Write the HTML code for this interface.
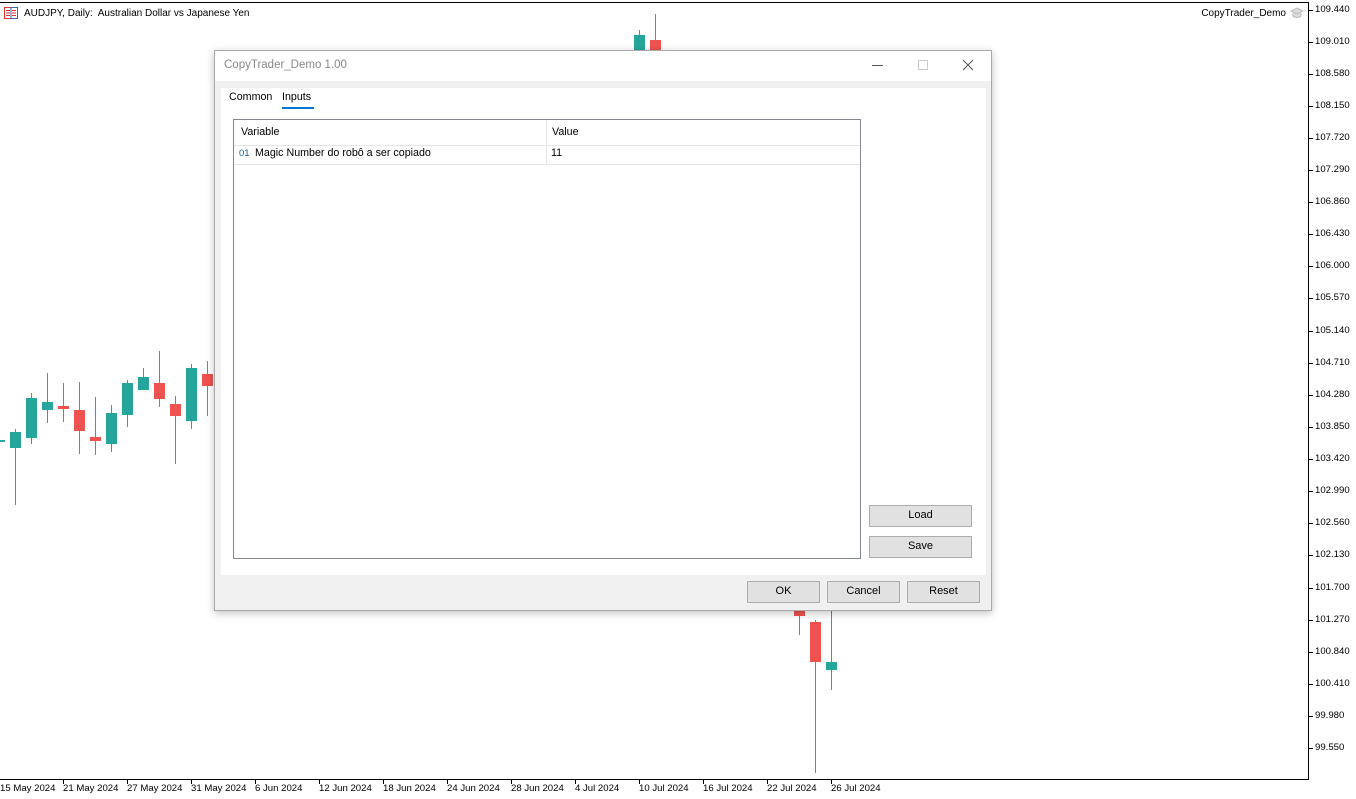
<!DOCTYPE html>
<html><head><meta charset="utf-8"><style>
*{margin:0;padding:0;box-sizing:border-box}
body{width:1356px;height:799px;background:#fff;position:relative;overflow:hidden;font-family:"Liberation Sans",sans-serif;}
.a{position:absolute}
.t{position:absolute;font-size:9.6px;color:#000;white-space:nowrap;line-height:12px}
.btn{position:absolute;background:#e1e1e1;border:1px solid #adadad;font-size:11px;text-align:center;line-height:19px;color:#000}
.d{font-size:10.7px;color:#000;position:absolute;white-space:nowrap}
</style></head><body>
<div class="a" style="left:0;top:2px;width:1308px;height:1px;background:#000"></div>
<div class="a" style="left:1308px;top:2px;width:1px;height:778px;background:#000"></div>
<div class="a" style="left:0;top:779px;width:1309px;height:1px;background:#000"></div>
<svg class="a" style="left:4px;top:7px" width="14" height="12"><rect x="0.5" y="0.5" width="13" height="11" fill="#fff" stroke="#d33"/><rect x="7" y="0.5" width="6.5" height="11" fill="none" stroke="#36c"/><path d="M2 3.5h4M2 6h4M2 8.5h4M8 3.5h4M8 6h4M8 8.5h4" stroke="#d33"/></svg>
<div class="t" style="left:24px;top:8px;font-size:10px">AUDJPY, Daily:&nbsp; Australian Dollar vs Japanese Yen</div>
<div class="t" style="right:70px;top:8px;font-size:10px">CopyTrader_Demo</div>
<svg class="a" style="left:1290px;top:7px" width="14" height="12"><path d="M1 4l6-3 6 3-6 3z M3 6v3c2 2 6 2 8 0V6" fill="#ddd" stroke="#bbb"/></svg>
<svg class="a" style="left:0;top:0" width="1308" height="779">
<g stroke-width="1">
<g fill="#26a69a" stroke="#26a69a">
<line x1="15.5" y1="429" x2="15.5" y2="505"/><rect x="10" y="432" width="11" height="16" stroke="none"/>
<rect x="0" y="440" width="5" height="2" stroke="none"/>
<line x1="31.5" y1="393" x2="31.5" y2="444"/><rect x="26" y="398" width="11" height="40" stroke="none"/>
<line x1="47.5" y1="373" x2="47.5" y2="423"/><rect x="42" y="402" width="11" height="8" stroke="none"/>
<line x1="111.5" y1="405" x2="111.5" y2="452"/><rect x="106" y="413" width="11" height="31" stroke="none"/>
<line x1="127.5" y1="380" x2="127.5" y2="427"/><rect x="122" y="383" width="11" height="32" stroke="none"/>
<line x1="143.5" y1="368" x2="143.5" y2="390"/><rect x="138" y="377" width="11" height="13" stroke="none"/>
<line x1="191.5" y1="364" x2="191.5" y2="429"/><rect x="186" y="368" width="11" height="53" stroke="none"/>
<line x1="639.5" y1="30" x2="639.5" y2="52"/><rect x="634" y="35" width="11" height="17" stroke="none"/>
<line x1="831.5" y1="610" x2="831.5" y2="690"/><rect x="826" y="662" width="11" height="8" stroke="none"/>
</g>
<g fill="#ef5350" stroke="#ef5350">
<line x1="63.5" y1="383" x2="63.5" y2="422"/><rect x="58" y="406" width="11" height="3" stroke="none"/>
<line x1="79.5" y1="382" x2="79.5" y2="454"/><rect x="74" y="410" width="11" height="21" stroke="none"/>
<line x1="95.5" y1="397" x2="95.5" y2="455"/><rect x="90" y="437" width="11" height="4" stroke="none"/>
<line x1="159.5" y1="351" x2="159.5" y2="407"/><rect x="154" y="383" width="11" height="16" stroke="none"/>
<line x1="175.5" y1="396" x2="175.5" y2="464"/><rect x="170" y="404" width="11" height="12" stroke="none"/>
<line x1="207.5" y1="361" x2="207.5" y2="416"/><rect x="202" y="374" width="11" height="12" stroke="none"/>
<line x1="655.5" y1="14" x2="655.5" y2="52"/><rect x="650" y="40" width="11" height="12" stroke="none"/>
<line x1="799.5" y1="609" x2="799.5" y2="635"/><rect x="794" y="609" width="11" height="7" stroke="none"/>
<line x1="815.5" y1="620" x2="815.5" y2="773"/><rect x="810" y="622" width="11" height="40" stroke="none"/>
</g>
</g>
</svg>
<div class="t" style="left:1315px;top:4px">109.440</div>
<div class="t" style="left:1315px;top:36px">109.010</div>
<div class="t" style="left:1315px;top:68px">108.580</div>
<div class="t" style="left:1315px;top:100px">108.150</div>
<div class="t" style="left:1315px;top:132px">107.720</div>
<div class="t" style="left:1315px;top:164px">107.290</div>
<div class="t" style="left:1315px;top:196px">106.860</div>
<div class="t" style="left:1315px;top:228px">106.430</div>
<div class="t" style="left:1315px;top:260px">106.000</div>
<div class="t" style="left:1315px;top:292px">105.570</div>
<div class="t" style="left:1315px;top:325px">105.140</div>
<div class="t" style="left:1315px;top:357px">104.710</div>
<div class="t" style="left:1315px;top:389px">104.280</div>
<div class="t" style="left:1315px;top:421px">103.850</div>
<div class="t" style="left:1315px;top:453px">103.420</div>
<div class="t" style="left:1315px;top:485px">102.990</div>
<div class="t" style="left:1315px;top:517px">102.560</div>
<div class="t" style="left:1315px;top:549px">102.130</div>
<div class="t" style="left:1315px;top:582px">101.700</div>
<div class="t" style="left:1315px;top:614px">101.270</div>
<div class="t" style="left:1315px;top:646px">100.840</div>
<div class="t" style="left:1315px;top:678px">100.410</div>
<div class="t" style="left:1315px;top:710px">99.980</div>
<div class="t" style="left:1315px;top:742px">99.550</div>
<svg class="a" style="left:1309px;top:0" width="5" height="780" stroke="#000"><path d="M0 10.5h4M0 42.5h4M0 74.5h4M0 106.5h4M0 138.5h4M0 170.5h4M0 202.5h4M0 234.5h4M0 266.5h4M0 298.5h4M0 331.5h4M0 363.5h4M0 395.5h4M0 427.5h4M0 459.5h4M0 491.5h4M0 523.5h4M0 555.5h4M0 588.5h4M0 620.5h4M0 652.5h4M0 684.5h4M0 716.5h4M0 748.5h4"/></svg>
<svg class="a" style="left:0;top:780px" width="1308" height="5" stroke="#000"><path d="M63.5 0v4M127.5 0v4M191.5 0v4M255.5 0v4M319.5 0v4M383.5 0v4M447.5 0v4M511.5 0v4M575.5 0v4M639.5 0v4M703.5 0v4M767.5 0v4M831.5 0v4"/></svg>
<div class="t" style="left:0;top:783px">15 May 2024</div>
<div class="t" style="left:63px;top:783px">21 May 2024</div>
<div class="t" style="left:127px;top:783px">27 May 2024</div>
<div class="t" style="left:191px;top:783px">31 May 2024</div>
<div class="t" style="left:255px;top:783px">6 Jun 2024</div>
<div class="t" style="left:319px;top:783px">12 Jun 2024</div>
<div class="t" style="left:383px;top:783px">18 Jun 2024</div>
<div class="t" style="left:447px;top:783px">24 Jun 2024</div>
<div class="t" style="left:511px;top:783px">28 Jun 2024</div>
<div class="t" style="left:575px;top:783px">4 Jul 2024</div>
<div class="t" style="left:639px;top:783px">10 Jul 2024</div>
<div class="t" style="left:703px;top:783px">16 Jul 2024</div>
<div class="t" style="left:767px;top:783px">22 Jul 2024</div>
<div class="t" style="left:831px;top:783px">26 Jul 2024</div>

<div class="a" style="left:214px;top:50px;width:778px;height:561px;background:#f0f0f0;border:1px solid #aaa;box-shadow:0 2px 8px rgba(0,0,0,.25)">
  <div class="a" style="left:0;top:0;width:776px;height:30px;background:#fff"></div>
  <div class="d" style="left:9px;top:8px;color:#888;font-size:11.5px">CopyTrader_Demo 1.00</div>
  <div class="a" style="left:657px;top:14px;width:11px;height:1px;background:#555"></div>
  <div class="a" style="left:703px;top:9px;width:10px;height:10px;border:1px solid #ccc"></div>
  <svg class="a" style="left:747px;top:8px" width="12" height="12" stroke="#555"><path d="M1 1l10 10M11 1L1 11"/></svg>
  <div class="a" style="left:6px;top:37px;width:765px;height:487px;background:#fff"></div>
  <div class="d" style="left:14px;top:40px">Common</div>
  <div class="d" style="left:67px;top:40px">Inputs</div>
  <div class="a" style="left:67px;top:56px;width:32px;height:2px;background:#0078d4"></div>
  <div class="a" style="left:18px;top:68px;width:628px;height:440px;border:1px solid #828790;background:#fff">
    <div class="a" style="left:0;top:0;width:626px;height:26px;border-bottom:1px solid #e5e5e5"></div>
    <div class="a" style="left:312px;top:0;width:1px;height:44px;background:#e5e5e5"></div>
    <div class="a" style="left:0;top:44px;width:626px;height:1px;background:#e5e5e5"></div>
    <div class="d" style="left:7px;top:6px">Variable</div>
    <div class="d" style="left:318px;top:6px">Value</div>
    <div class="d" style="left:5px;top:28px;color:#1a5fa0;font-size:9.5px">01</div>
    <div class="d" style="left:21px;top:27px">Magic Number do robô a ser copiado</div>
    <div class="d" style="left:317px;top:27px">11</div>
  </div>
  <div class="btn" style="left:654px;top:454px;width:103px;height:22px">Load</div>
  <div class="btn" style="left:654px;top:485px;width:103px;height:22px">Save</div>
  <div class="btn" style="left:532px;top:530px;width:73px;height:22px">OK</div>
  <div class="btn" style="left:612px;top:530px;width:73px;height:22px">Cancel</div>
  <div class="btn" style="left:692px;top:530px;width:73px;height:22px">Reset</div>
</div>
</body></html>
